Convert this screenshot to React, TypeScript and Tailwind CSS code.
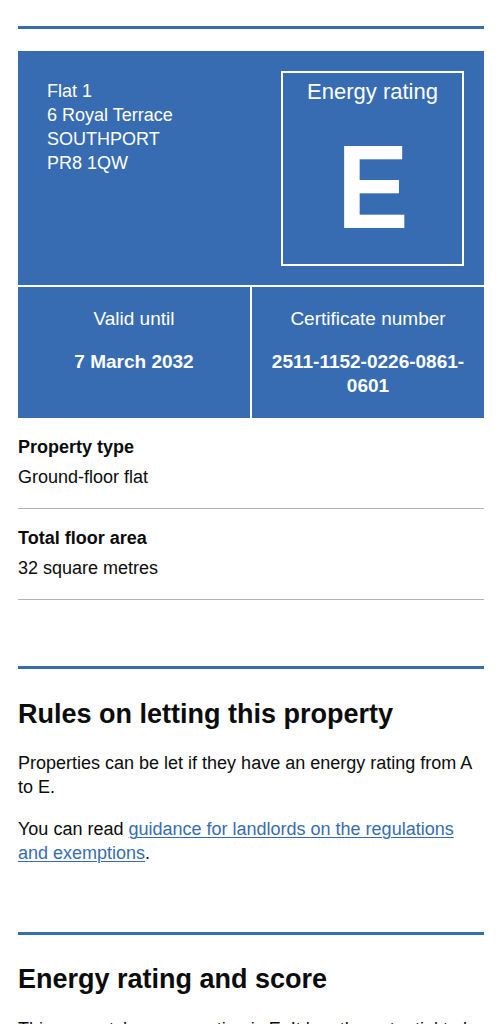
import React from 'react';

const details = [
  { label: 'Property type', value: 'Ground-floor flat' },
  { label: 'Total floor area', value: '32 square metres' },
];

export default function App() {
  return (
    <div className="bg-white text-[#0b0c0c] min-h-screen px-[18px] pt-[26px] font-['Liberation_Sans',Arial,sans-serif]">
      <div className="h-[3px] bg-[#386cb2]"></div>

      {/* Certificate summary */}
      <div className="mt-[22px] flex flex-col gap-[2px]">
        <div className="bg-[#386cb2] text-white flex justify-between pl-[29px] pr-[20px] pt-[20px] pb-[19px]">
          <div className="pt-[8px] text-[18px] leading-[24px]">
            <p>Flat 1</p>
            <p>6 Royal Terrace</p>
            <p>SOUTHPORT</p>
            <p>PR8 1QW</p>
          </div>
          <div className="w-[183px] h-[195px] border-2 border-white flex flex-col items-center pt-[5px]">
            <p className="text-[22px] leading-[28px]">Energy rating</p>
            <p className="mt-[21px] text-[119px] leading-[119px] font-bold scale-x-[0.9]">E</p>
          </div>
        </div>
        <div className="grid grid-cols-2 gap-[2px]">
          <div className="bg-[#386cb2] text-white text-center text-[19px] leading-[24px] pt-[20px] pb-[20px] px-[15px]">
            <p>Valid until</p>
            <p className="mt-[19px] font-bold">7 March 2032</p>
          </div>
          <div className="bg-[#386cb2] text-white text-center text-[19px] leading-[24px] pt-[20px] pb-[20px] px-[15px]">
            <p>Certificate number</p>
            <p className="mt-[19px] font-bold">2511-1152-0226-0861-0601</p>
          </div>
        </div>
      </div>

      {/* Property details */}
      <dl className="text-[18px] leading-[24px]">
        {details.map((d) => (
          <div key={d.label} className="pt-[17px] pb-[19px] border-b border-[#b1b4b6]">
            <dt className="font-bold">{d.label}</dt>
            <dd className="mt-[6px]">{d.value}</dd>
          </div>
        ))}
      </dl>

      {/* Rules on letting */}
      <div className="mt-[66px] h-[3px] bg-[#386cb2]"></div>
      <h2 className="mt-[29px] text-[27px] leading-[32px] font-bold">Rules on letting this property</h2>
      <p className="mt-[21px] text-[18px] leading-[24px]">
        Properties can be let if they have an energy rating from A to E.
      </p>
      <p className="mt-[18px] text-[18px] leading-[24px]">
        You can read{' '}
        <a href="#" className="text-[#386cb2] underline decoration-1 underline-offset-2">
          guidance for landlords on the regulations and exemptions
        </a>
        .
      </p>

      {/* Energy rating and score */}
      <div className="mt-[67px] h-[3px] bg-[#386cb2]"></div>
      <h2 className="mt-[28px] text-[27px] leading-[32px] font-bold">Energy rating and score</h2>
      <p className="mt-[22px] text-[18px] leading-[24px] pb-10">
        This property’s energy rating is E. It has the potential to be C.
      </p>
    </div>
  );
}
